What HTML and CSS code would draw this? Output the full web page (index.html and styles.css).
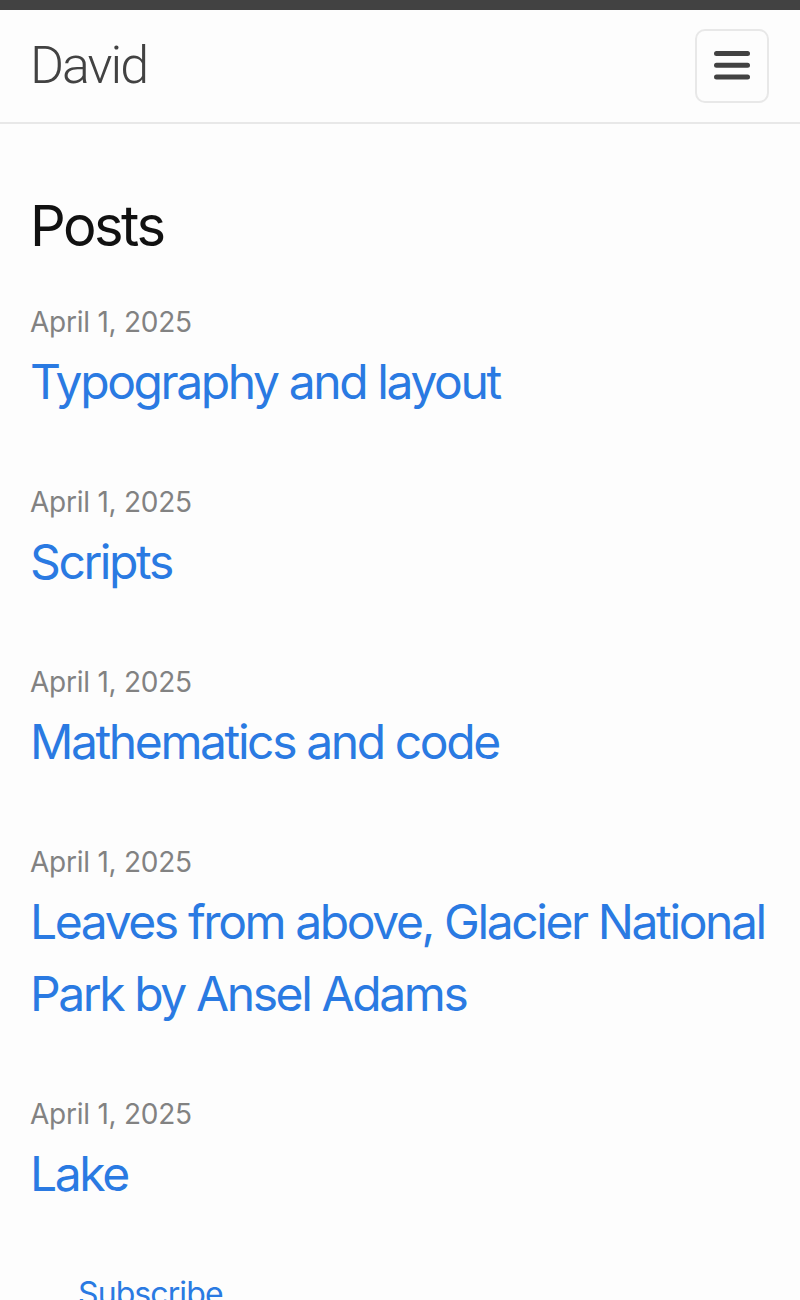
FILE: index.html
```html
<!DOCTYPE html>
<html lang="en">
<head>
<meta charset="utf-8">
<title>David</title>
<link rel="stylesheet" href="styles.css">
</head>
<body>
<header class="site-header">
  <div class="header-inner">
    <a class="site-title" href="#">David</a>
    <button class="nav-trigger" aria-label="Menu">
      <svg viewBox="0 0 36 30" width="36" height="30">
        <rect x="0" y="0" width="36" height="5" rx="2.5" fill="#424242"/>
        <rect x="0" y="11.7" width="36" height="5" rx="2.5" fill="#424242"/>
        <rect x="0" y="23.4" width="36" height="5" rx="2.5" fill="#424242"/>
      </svg>
    </button>
  </div>
</header>
<main class="page-content">
  <h2 class="post-list-heading">Posts</h2>
  <ul class="post-list">
    <li>
      <span class="post-meta">April 1, 2025</span>
      <h3 class="post-title"><a class="post-link" href="#">Typography and layout</a></h3>
    </li>
    <li>
      <span class="post-meta">April 1, 2025</span>
      <h3 class="post-title"><a class="post-link" href="#">Scripts</a></h3>
    </li>
    <li>
      <span class="post-meta">April 1, 2025</span>
      <h3 class="post-title"><a class="post-link" href="#">Mathematics and code</a></h3>
    </li>
    <li>
      <span class="post-meta">April 1, 2025</span>
      <h3 class="post-title"><a class="post-link" href="#">Leaves from above, Glacier National Park by Ansel Adams</a></h3>
    </li>
    <li>
      <span class="post-meta">April 1, 2025</span>
      <h3 class="post-title"><a class="post-link" href="#">Lake</a></h3>
    </li>
  </ul>
  <p class="subscribe"><a href="#">Subscribe</a></p>
</main>
</body>
</html>
```
FILE: styles.css
```css
html, body {
  margin: 0;
  padding: 0;
}
body {
  background: #fdfdfd;
  color: #111111;
  font-family: Inter, "Noto Sans", sans-serif;
  font-size: 32px;
  line-height: 1.5;
}
.site-header {
  border-top: 10px solid #424242;
  border-bottom: 2px solid #e8e8e8;
}
.header-inner {
  height: 112px;
  padding: 0 31px 0 30px;
  display: flex;
  align-items: center;
  justify-content: space-between;
}
.site-title {
  font-family: Roboto, "Liberation Sans", sans-serif;
  font-weight: 300;
  font-size: 52px;
  letter-spacing: -2px;
  color: #424242;
  text-decoration: none;
}
.nav-trigger {
  width: 74px;
  height: 74px;
  box-sizing: border-box;
  border: 2px solid #e8e8e8;
  border-radius: 10px;
  background: #fdfdfd;
  display: flex;
  align-items: center;
  justify-content: center;
  padding: 0;
}
.nav-trigger svg {
  display: block;
}
.page-content {
  padding: 60px 30px;
}
.post-list-heading {
  font-size: 56px;
  line-height: 84px;
  font-weight: 400;
  margin: 0 0 30px;
  letter-spacing: -2.5px;
}
.post-list {
  list-style: none;
  margin: 0;
  padding: 0;
}
.post-list li {
  margin-bottom: 60px;
}
.post-meta {
  display: block;
  font-size: 28px;
  line-height: 48px;
  color: #828282;
  letter-spacing: -0.25px;
}
.post-title {
  margin: 0;
  font-size: 48px;
  line-height: 72px;
  font-weight: 400;
}
.post-link {
  color: #2a7ae2;
  text-decoration: none;
  letter-spacing: -2.4px;
}
.subscribe {
  margin: 0;
  padding-left: 48px;
  font-size: 32px;
  line-height: 48px;
}
.subscribe a {
  color: #2a7ae2;
  text-decoration: none;
  letter-spacing: -0.9px;
}
```
